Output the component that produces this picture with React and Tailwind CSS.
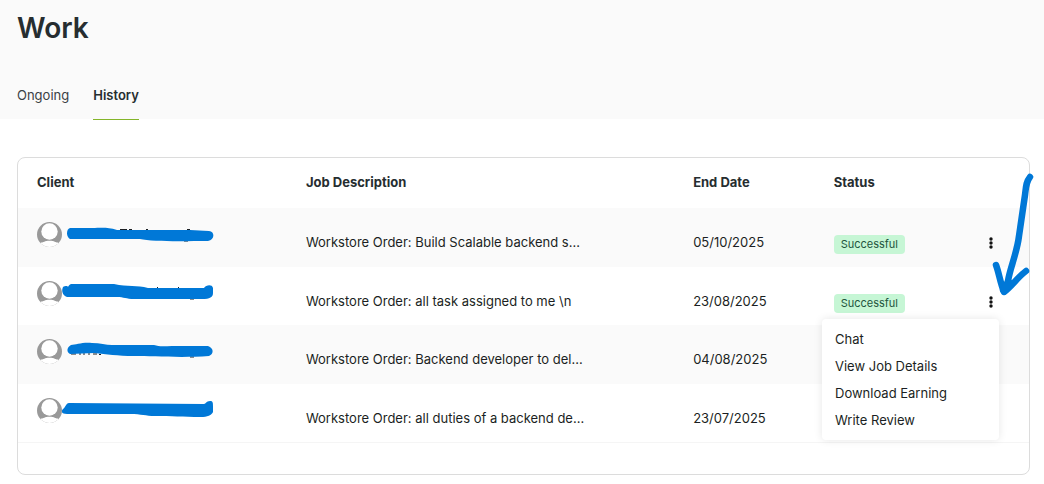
import React, { useState } from "react";

const rows = [
  {
    job: "Workstore Order: Build Scalable backend s...",
    date: "05/10/2025",
    height: "h-[59px]",
    stripe: "bg-[#fafafa]",
    mark: "M8 6 C4 7 4 15 8 17 L78 17 C90 20 125 19 146 19 C153 18 153 9 147 9 C140 9 135 8 128 8 L55 8 C45 5 40 6 30 6 Z",
    marks: "M58 7.500 h7 M67 7.500 h3 M84 7.500 h2 M125 7.500 h3 M122 19 h4",
  },
  {
    job: "Workstore Order: all task assigned to me \\n",
    date: "23/08/2025",
    height: "h-[58px]",
    stripe: "bg-white",
    mark: "M1 6 C-1 10 1 15 5 16 L55 16 C62 16 64 18 72 18 L140 18 C148 18 151 16 151 12 L151 7 C150 3 144 4 142 7 L86 7 C75 4 66 6 52 3 L9 3 C6 4 7 7 5 5 C3 5 2 5 1 6 Z",
    marks: "M128 18 h4 M95 6.500 h1 M116 6.500 h1",
  },
  {
    job: "Workstore Order: Backend developer to del...",
    date: "04/08/2025",
    height: "h-[59px]",
    stripe: "bg-[#fafafa]",
    mark: "M9 6 C14 6 20 3 30 4 C38 4 44 6 50 6 L92 6 C98 8 103 7 110 7 L146 7 C152 9 152 15 147 17 C120 19 90 17 72 17 C55 17 45 15 32 14 L8 15 C4 13 5 8 9 6 Z",
    marks: "M9 15 h5 M17 15 h2 M21 15 h2 M26 15 h2 M31 15 h4 M37 15.500 h2 M128 18 h4",
  },
  {
    job: "Workstore Order: all duties of a backend de...",
    date: "23/07/2025",
    height: "h-[58px]",
    stripe: "bg-white",
    mark: "M1 11 C3 10 4 5 7 5 L142 6 C144 6 144 3 148 3 C151 3 151 5 151 8 L151 14 C150 17 145 19 139 19 C120 19 110 18 93 18 C83 18 80 16 68 16 L5 16 C-1 16 -1 13 1 11 Z",
    marks: "",
  },
];

const actions = ["Chat", "View Job Details", "Download Earning", "Write Review"];

function Avatar() {
  return (
    <svg width="25" height="25" viewBox="0 0 25 25" className="shrink-0" aria-hidden="true">
      <defs>
        <clipPath id="avatar-clip">
          <circle cx="12.500" cy="12.500" r="12.500" />
        </clipPath>
      </defs>
      <g clipPath="url(#avatar-clip)">
        <rect width="25" height="25" fill="#999" />
        <circle cx="12.500" cy="9.500" r="8.200" fill="#fff" />
        <path d="M0 25 L4 20.500 C6 21 7 18.800 12.500 18.800 C18 18.800 19 21 21 20.500 L25 25 Z" fill="#fff" />
      </g>
    </svg>
  );
}

export default function App() {
  const [tab, setTab] = useState("History");
  const [openRow, setOpenRow] = useState(1);

  // The open menu spans the status cells of the two rows below its own.
  const isCovered = (i) => openRow >= 0 && i > openRow && i <= openRow + 2;

  return (
    <div className="font-['Inter',sans-serif] text-[13px] leading-5 text-[#1b1f23]">
      <header className="bg-[#fafafa] px-[17px] pt-2">
        <h1 className="text-[28px] font-semibold leading-10 text-[#262d30]">Work</h1>
        <nav className="mt-[37px] flex h-[34px] gap-6">
          {["Ongoing", "History"].map((name) => (
            <button
              key={name}
              type="button"
              onClick={() => setTab(name)}
              className={
                tab === name
                  ? "-mb-px border-b border-[#84b52a] pb-[14px] font-semibold text-[#262d30]"
                  : "-mb-px border-b border-transparent pb-[14px] text-[#3a4145]"
              }
            >
              {name}
            </button>
          ))}
        </nav>
      </header>

      <main className="pb-2 pl-[17px] pr-[14px] pt-[38px]">
        <section className="relative rounded-lg border border-[#dcdcdc] bg-white pb-[31px]">
          <table className="w-full table-fixed border-b border-[#f5f5f5] text-left">
            <colgroup>
              <col className="w-[26.600%]" />
              <col className="w-[38.300%]" />
              <col className="w-[13.900%]" />
              <col />
              <col className="w-[77px]" />
            </colgroup>
            <thead>
              <tr className="h-[50px] text-[#262d30]">
                <th className="pb-[2px] pl-[19px] font-bold">Client</th>
                <th className="pb-[2px] pl-[19px] font-bold">Job Description</th>
                <th className="pb-[2px] pl-[19px] font-bold">End Date</th>
                <th className="pb-[2px] pl-[19px] font-bold">Status</th>
                <th aria-label="Actions" />
              </tr>
            </thead>
            <tbody>
              {rows.map((row, i) => (
                <tr key={row.date} className={`${row.height} ${row.stripe} align-top`}>
                  <td className="pl-[19px] pt-[14px]">
                    <div className="flex">
                      <Avatar />
                      <svg width="154" height="24" viewBox="0 0 154 24" aria-hidden="true">
                        <path d={row.marks} stroke="#1b1f23" fill="none" />
                        <path d={row.mark} fill="#0078d7" />
                      </svg>
                    </div>
                  </td>
                  <td className="truncate pl-[19px] pt-6">{row.job}</td>
                  <td className="pl-[19px] pt-6">{row.date}</td>
                  <td className="pl-[19px] pt-[27px]">
                    {!isCovered(i) && (
                      <span className="block w-fit rounded bg-[#c6f6d5] px-[7px] text-[11px] leading-[19px] text-[#22543d]">
                        Successful
                      </span>
                    )}
                  </td>
                  <td className="relative pt-[26px]">
                    <button
                      type="button"
                      aria-label="Row actions"
                      aria-expanded={openRow === i}
                      onClick={() => setOpenRow(openRow === i ? -1 : i)}
                      className="ml-[31px] block"
                    >
                      <svg width="16" height="18" viewBox="0 0 16 18" fill="#111">
                        <circle cx="8" cy="5" r="1.700" />
                        <circle cx="8" cy="9" r="1.700" />
                        <circle cx="8" cy="13" r="1.700" />
                      </svg>
                    </button>
                    {openRow === i && (
                      <ul className="absolute right-[30px] top-[52px] z-10 w-[177px] rounded bg-white pb-[6px] pt-[7px] shadow-[0_0_8px_rgba(0,0,0,0.1)]">
                        {actions.map((action) => (
                          <li key={action}>
                            <button type="button" className="block w-full px-[13px] text-left leading-[27px]">
                              {action}
                            </button>
                          </li>
                        ))}
                      </ul>
                    )}
                  </td>
                </tr>
              ))}
            </tbody>
          </table>
          <svg
            className="pointer-events-none absolute -right-[7px] top-[12px] z-20"
            width="48"
            height="130"
            viewBox="988 170 48 130"
            fill="none"
            stroke="#0078d7"
            strokeWidth="6.500"
            strokeLinecap="round"
            strokeLinejoin="round"
            aria-hidden="true"
          >
            <path d="M1030 177 C1026 182 1026 187 1025 195 C1023 209 1021 223 1019 236 C1017 253 1010 268 1008 281 L1004 291" />
            <path d="M996 265 C999 273 1000 282 1004 292 C1011 287 1018 277 1026 271" />
            <path d="M1004 290 L1009 283" strokeWidth="8" />
          </svg>
        </section>
      </main>
    </div>
  );
}
